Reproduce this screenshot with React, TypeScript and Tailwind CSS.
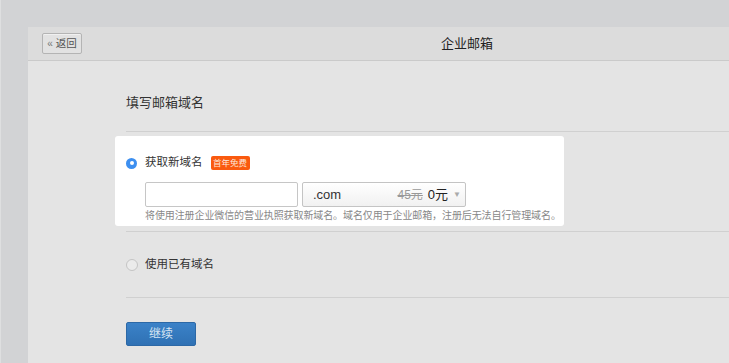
import React from "react";

export default function App() {
  return (
    <div
      className="w-[729px] h-[363px] overflow-hidden bg-[#d2d3d5] relative"
      style={{ fontFamily: '"Liberation Sans", "Noto Sans CJK SC", sans-serif' }}
    >
      <div className="flex h-full">
        <div className="w-[28px] shrink-0 h-full border-l border-[#dedfe0]" />
        <div className="w-[878px] shrink-0 mt-[27px] bg-[#e4e4e4] flex flex-col">
          {/* header */}
          <div className="h-[34px] bg-[#dcdcdc] border-b border-[#cacaca] relative flex items-center justify-center">
            <div className="absolute left-[14px] top-[6px] w-[40px] h-[21px] border border-[#b4b4b4] rounded-[2px] bg-[#e2e2e2] flex items-center justify-center gap-[3px] text-[10.5px] text-[#555] shadow-[inset_0_1px_0_#f0f0f0]">
              <span className="text-[10px] leading-none text-[#777]">«</span>
              <span className="leading-none">返回</span>
            </div>
            <span className="text-[13px] text-[#222] leading-none">企业邮箱</span>
          </div>
          {/* content */}
          <div className="pl-[98px] flex flex-col">
            <div className="pt-[32px] pb-[18px] border-b border-[#d0d0d0]">
              <div className="text-[13px] leading-[20px] text-[#333]">填写邮箱域名</div>
            </div>
            <div className="border-b border-[#d0d0d0] pt-[4px] pb-[5px]">
              <div className="-ml-[11px] w-[449px] h-[90px] bg-white rounded-[3px] pl-[11px] pt-[19px] pb-[3px] flex flex-col">
                <div className="h-[16px] flex items-center">
                  <div className="w-[11px] h-[11px] rounded-full bg-[#3d8ff0] flex items-center justify-center">
                    <div className="w-[4px] h-[4px] rounded-full bg-white" />
                  </div>
                  <span className="ml-[8px] text-[11.5px] text-[#333] leading-none">获取新域名</span>
                  <span className="ml-[8px] w-[39px] h-[14px] rounded-[2px] bg-[#fa5a0f] text-[#fde8dc] text-[8.5px] leading-none flex items-center justify-center">
                    首年免费
                  </span>
                </div>
                <div className="mt-[11px] ml-[19px] flex gap-[4px] h-[25px]">
                  <div className="w-[153px] h-full border border-[#c6c6c6] rounded-[2px] bg-white" />
                  <div className="w-[164px] h-full border border-[#c4c4c4] rounded-[2px] bg-gradient-to-b from-white to-[#f1f1f1] flex items-center pl-[10px] pr-[4px]">
                    <span className="text-[13px] text-[#333]">.com</span>
                    <span className="ml-auto text-[12px] text-[#999] line-through">45元</span>
                    <span className="ml-[5px] text-[13px] text-[#222]">0元</span>
                    <span className="ml-[5px] text-[8px] text-[#aaa]">▼</span>
                  </div>
                </div>
                <div className="mt-[2px] ml-[19px] text-[10px] leading-[14px] text-[#888] whitespace-nowrap tracking-[-0.1px]">
                  将使用注册企业微信的营业执照获取新域名。域名仅用于企业邮箱，注册后无法自行管理域名。
                </div>
              </div>
            </div>
            <div className="h-[66px] border-b border-[#d0d0d0] flex items-center">
              <div className="w-[12px] h-[12px] rounded-full border border-[#c4c4c4] bg-[#ebebeb]" />
              <span className="ml-[7px] text-[11.5px] text-[#333] leading-none">使用已有域名</span>
            </div>
            <div className="mt-[24px]">
              <div className="w-[70px] h-[24px] rounded-[2px] border border-[#2c68a6] bg-gradient-to-b from-[#3b82c8] to-[#2f71b4] text-[#d7e4f2] text-[12px] flex items-center justify-center">
                继续
              </div>
            </div>
          </div>
        </div>
      </div>
    </div>
  );
}
